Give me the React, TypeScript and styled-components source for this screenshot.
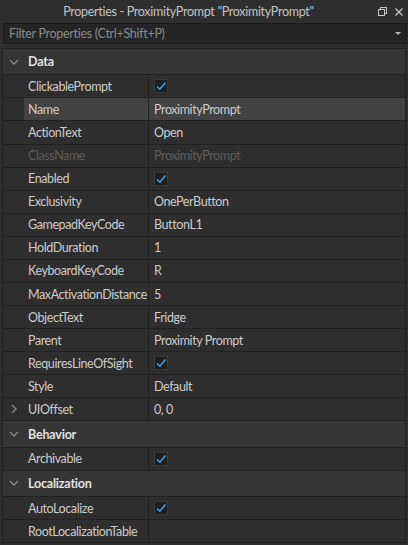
import * as React from 'react';
import styled, { createGlobalStyle } from 'styled-components';

type Prop = {
    name: string;
    value?: string;
    check?: boolean;
    disabled?: boolean;
    selected?: boolean;
    expandable?: boolean;
};

type Category = {
    title: string;
    props: Prop[];
};

const categories: Category[] = [
    {
        title: 'Data',
        props: [
            { name: 'ClickablePrompt', check: true },
            { name: 'Name', value: 'ProximityPrompt', selected: true },
            { name: 'ActionText', value: 'Open' },
            { name: 'ClassName', value: 'ProximityPrompt', disabled: true },
            { name: 'Enabled', check: true },
            { name: 'Exclusivity', value: 'OnePerButton' },
            { name: 'GamepadKeyCode', value: 'ButtonL1' },
            { name: 'HoldDuration', value: '1' },
            { name: 'KeyboardKeyCode', value: 'R' },
            { name: 'MaxActivationDistance', value: '5' },
            { name: 'ObjectText', value: 'Fridge' },
            { name: 'Parent', value: 'Proximity Prompt' },
            { name: 'RequiresLineOfSight', check: true },
            { name: 'Style', value: 'Default' },
            { name: 'UIOffset', value: '0, 0', expandable: true },
        ],
    },
    {
        title: 'Behavior',
        props: [{ name: 'Archivable', check: true }],
    },
    {
        title: 'Localization',
        props: [
            { name: 'AutoLocalize', check: true },
            { name: 'RootLocalizationTable', value: '' },
        ],
    },
];

const GlobalStyle = createGlobalStyle`
    html, body {
        margin: 0;
        padding: 0;
        background: #2e2e2e;
    }
    body {
        font-family: "Lato", "Open Sans", sans-serif;
        font-size: 12.5px;
        color: #cccccc;
    }
`;

function Chevron({ open }: { open: boolean }) {
    return (
        <svg width="10" height="10" viewBox="0 0 10 10">
            {open ? (
                <path d="M1 3 L5 7 L9 3" fill="none" stroke="#8a8a8a" strokeWidth="1.3" />
            ) : (
                <path d="M3 1 L7 5 L3 9" fill="none" stroke="#8a8a8a" strokeWidth="1.3" />
            )}
        </svg>
    );
}

function Check() {
    return (
        <CheckBox>
            <svg width="12" height="12" viewBox="0 0 12 12">
                <path d="M2 6.5 L4.8 9.2 L10.5 2.5" fill="none" stroke="#3b9fef" strokeWidth="1.6" />
            </svg>
        </CheckBox>
    );
}

export default function App() {
    return (
        <>
            <GlobalStyle />
            <Panel>
                <TitleBar>
                    <TitleText>Properties - ProximityPrompt "ProximityPrompt"</TitleText>
                    <TitleIcons>
                        <svg width="9" height="9" viewBox="0 0 9 9">
                            <rect x="2.5" y="0.5" width="6" height="6" fill="none" stroke="#c8c8c8" />
                            <rect x="0.5" y="2.5" width="6" height="6" fill="#2e2e2e" stroke="#c8c8c8" />
                        </svg>
                        <svg width="8" height="8" viewBox="0 0 8 8">
                            <path d="M0.5 0.5 L7.5 7.5 M7.5 0.5 L0.5 7.5" stroke="#c8c8c8" strokeWidth="1.2" />
                        </svg>
                    </TitleIcons>
                </TitleBar>
                <Filter>
                    <FilterText>Filter Properties (Ctrl+Shift+P)</FilterText>
                    <svg width="6" height="3" viewBox="0 0 6 3">
                        <path d="M0 0 L6 0 L3 3 Z" fill="#b8b8b8" />
                    </svg>
                </Filter>
                <List>
                    {categories.map((cat) => (
                        <React.Fragment key={cat.title}>
                            <HeaderRow>
                                <Expander>
                                    <Chevron open={true} />
                                </Expander>
                                <HeaderTitle>{cat.title}</HeaderTitle>
                            </HeaderRow>
                            {cat.props.map((p) => (
                                <Row key={p.name}>
                                    <Expander>{p.expandable && <Chevron open={false} />}</Expander>
                                    <NameCell selected={p.selected} disabled={p.disabled}>
                                        {p.name}
                                    </NameCell>
                                    <ValueCell selected={p.selected} disabled={p.disabled}>
                                        {p.check ? <Check /> : p.value}
                                    </ValueCell>
                                </Row>
                            ))}
                        </React.Fragment>
                    ))}
                </List>
            </Panel>
        </>
    );
}

const Panel = styled.div`
    width: 408px;
    height: 545px;
    display: flex;
    flex-direction: column;
    background: #2e2e2e;
    overflow: hidden;
`;

const TitleBar = styled.div`
    height: 23px;
    flex: none;
    display: flex;
    align-items: center;
    justify-content: center;
    padding-right: 31px;
    position: relative;
`;

const TitleText = styled.div`
    color: #c4c4c4;
    letter-spacing: -0.3px;
    white-space: nowrap;
`;

const TitleIcons = styled.div`
    position: absolute;
    right: 5px;
    top: 7px;
    display: flex;
    gap: 8px;
    align-items: center;
`;

const Filter = styled.div`
    height: 19px;
    flex: none;
    margin: 0 1px 0 3px;
    display: flex;
    align-items: center;
    justify-content: space-between;
    padding: 0 5px 0 5px;
    background: #252525;
    border: 1px solid #1c1c1c;
`;

const FilterText = styled.div`
    color: #8a8a8a;
    letter-spacing: -0.3px;
`;

const List = styled.div`
    margin: 4px 2px 0 2px;
    display: flex;
    flex-direction: column;
    border-top: 1px solid #222;
    border-left: 1px solid #252525;
    border-right: 1px solid #222;
`;

const HeaderRow = styled.div`
    height: 25.3px;
    flex: none;
    display: flex;
    align-items: center;
    background: #353535;
    border-bottom: 1px solid #222;
`;

const HeaderTitle = styled.div`
    font-weight: 700;
    color: #e2e2e2;
    padding-left: 4px;
    letter-spacing: -0.2px;
`;

const Expander = styled.div`
    width: 21px;
    flex: none;
    display: flex;
    align-items: center;
    justify-content: center;
    padding-left: 1px;
    box-sizing: border-box;
`;

const Row = styled.div`
    height: 22.08px;
    flex: none;
    display: flex;
    align-items: stretch;
    border-bottom: 1px solid #222;
`;

const NameCell = styled.div<{ selected?: boolean; disabled?: boolean }>`
    width: 120px;
    flex: none;
    display: flex;
    align-items: center;
    padding-left: 4px;
    letter-spacing: -0.4px;
    background: ${(p) => (p.selected ? '#424242' : 'transparent')};
    color: ${(p) => (p.disabled ? '#5c5c5c' : '#cccccc')};
    border-right: 1px solid #222;
    white-space: nowrap;
`;

const ValueCell = styled.div<{ selected?: boolean; disabled?: boolean }>`
    flex: 1;
    display: flex;
    align-items: center;
    padding-left: 5px;
    letter-spacing: -0.4px;
    background: ${(p) => (p.selected ? '#424242' : 'transparent')};
    color: ${(p) => (p.disabled ? '#5c5c5c' : '#cccccc')};
    white-space: nowrap;
`;

const CheckBox = styled.div`
    width: 14px;
    height: 14px;
    box-sizing: border-box;
    background: #1f1f1f;
    border: 1px solid #3a3a3a;
    display: flex;
    align-items: center;
    justify-content: center;
`;
